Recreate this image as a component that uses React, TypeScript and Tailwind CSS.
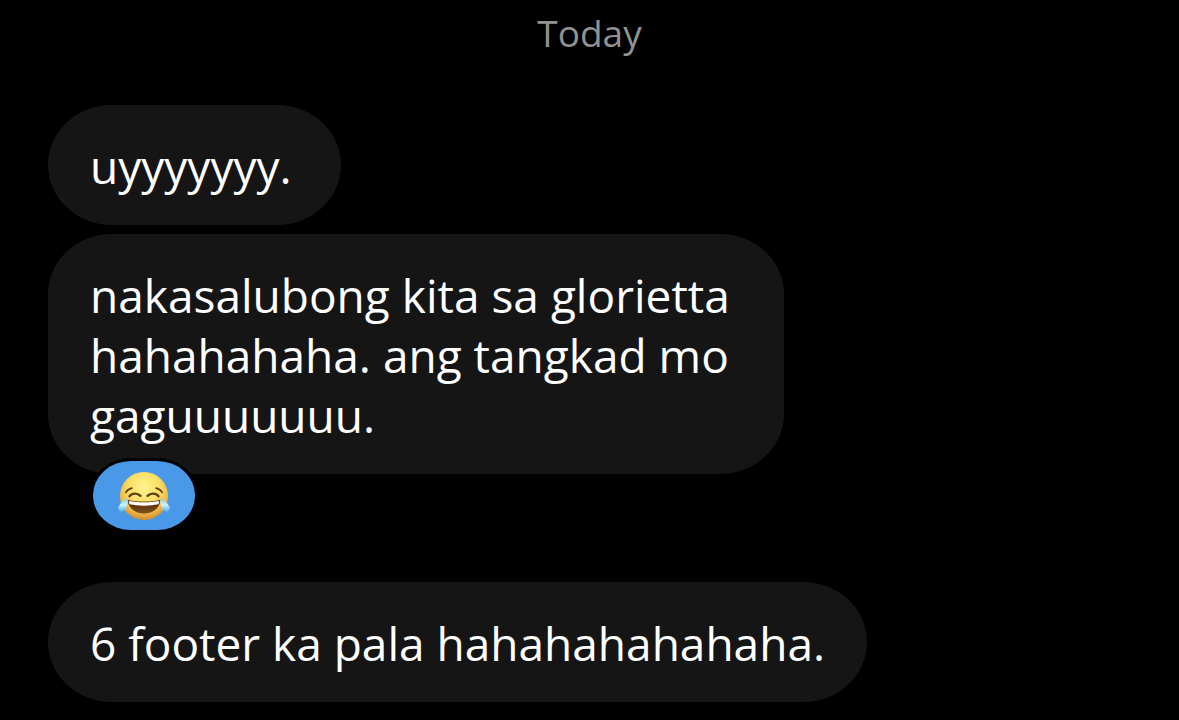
import type { ReactNode } from "react";

function JoyEmoji() {
  return (
    <svg viewBox="0 0 52 50" className="h-[50px] w-[52px]" role="img" aria-label="face with tears of joy">
      <defs>
        <radialGradient id="face" cx="0.5" cy="0.32" r="0.7">
          <stop offset="0" stopColor="#fff490" />
          <stop offset="0.45" stopColor="#fbdf66" />
          <stop offset="0.78" stopColor="#efb746" />
          <stop offset="1" stopColor="#c98430" />
        </radialGradient>
        <linearGradient id="mouth" x1="0" y1="0" x2="0" y2="1">
          <stop offset="0" stopColor="#4a2509" />
          <stop offset="1" stopColor="#80501d" />
        </linearGradient>
        <linearGradient id="tear" x1="0" y1="0" x2="0" y2="1">
          <stop offset="0" stopColor="#7accef" />
          <stop offset="0.5" stopColor="#d2f2fc" />
          <stop offset="1" stopColor="#54aee8" />
        </linearGradient>
      </defs>
      <circle cx="26" cy="25" r="24" fill="url(#face)" />
      <g fill="none" stroke="#5f3d12" strokeLinecap="round">
        <path d="M7.800 21.500c1.200-2.300 3.300-3.800 6-4.400" strokeWidth="1.600" />
        <path d="M44.200 21.500c-1.200-2.300-3.300-3.800-6-4.400" strokeWidth="1.600" />
        <path d="M11.500 25.300c2.500-3.400 8-3.400 11-.4" strokeWidth="2.300" />
        <path d="M40.500 25.300c-2.500-3.400-8-3.400-11-.4" strokeWidth="2.300" />
      </g>
      <path d="M9.800 29c10 2 22.400 2 32.400 0 0 7.500-7 13.500-16.200 13.500S9.800 36.500 9.800 29Z" fill="url(#mouth)" />
      <path d="M10.800 29.900c9.500 1.700 20.900 1.700 30.400 0 0 1.300-.3 2.400-.9 3.400-8.500 1.900-20.100 1.900-28.600 0-.6-1-.9-2.100-.9-3.400Z" fill="#fff" />
      <path d="M9.300 27C5 30 .8 33.500.4 37c-.2 2.500 1.900 4.200 4.300 3.600C9 39.500 9.800 33 9.300 27Z" fill="url(#tear)" />
      <path d="M42.700 27c4.300 3 8.500 6.500 8.900 10 .2 2.500-1.900 4.200-4.300 3.600C43 39.500 42.200 33 42.700 27Z" fill="url(#tear)" />
    </svg>
  );
}

function Bubble({ children }: { children: ReactNode }) {
  return (
    <p className="w-fit min-w-[293px] rounded-[64px/60px] bg-[#151515] px-[42px] pt-[31px] pb-[29px] text-[46px] leading-[60px] text-white">
      {children}
    </p>
  );
}

export default function App() {
  return (
    <main className="flex min-h-screen flex-col bg-black px-12 pt-[10px] pb-4 font-['Open_Sans',sans-serif]">
      <h1 className="text-center text-[37px] leading-[46px] font-normal text-[#929292]">Today</h1>
      <ul className="mt-[49px] flex flex-col items-start gap-[9px]">
        <li>
          <Bubble>uyyyyyyy.</Bubble>
        </li>
        <li className="relative mb-[99px] max-w-[736px]">
          <Bubble>nakasalubong kita sa glorietta hahahahaha. ang tangkad mo gaguuuuuuu.</Bubble>
          <button
            type="button"
            aria-label="Reaction"
            className="absolute top-[227px] left-[45px] flex h-[69px] w-[102px] items-center justify-center rounded-[38px/34px] bg-[#4a99e9] ring-3 ring-black"
          >
            <JoyEmoji />
          </button>
        </li>
        <li>
          <Bubble>6 footer ka pala hahahahahahaha.</Bubble>
        </li>
      </ul>
    </main>
  );
}
